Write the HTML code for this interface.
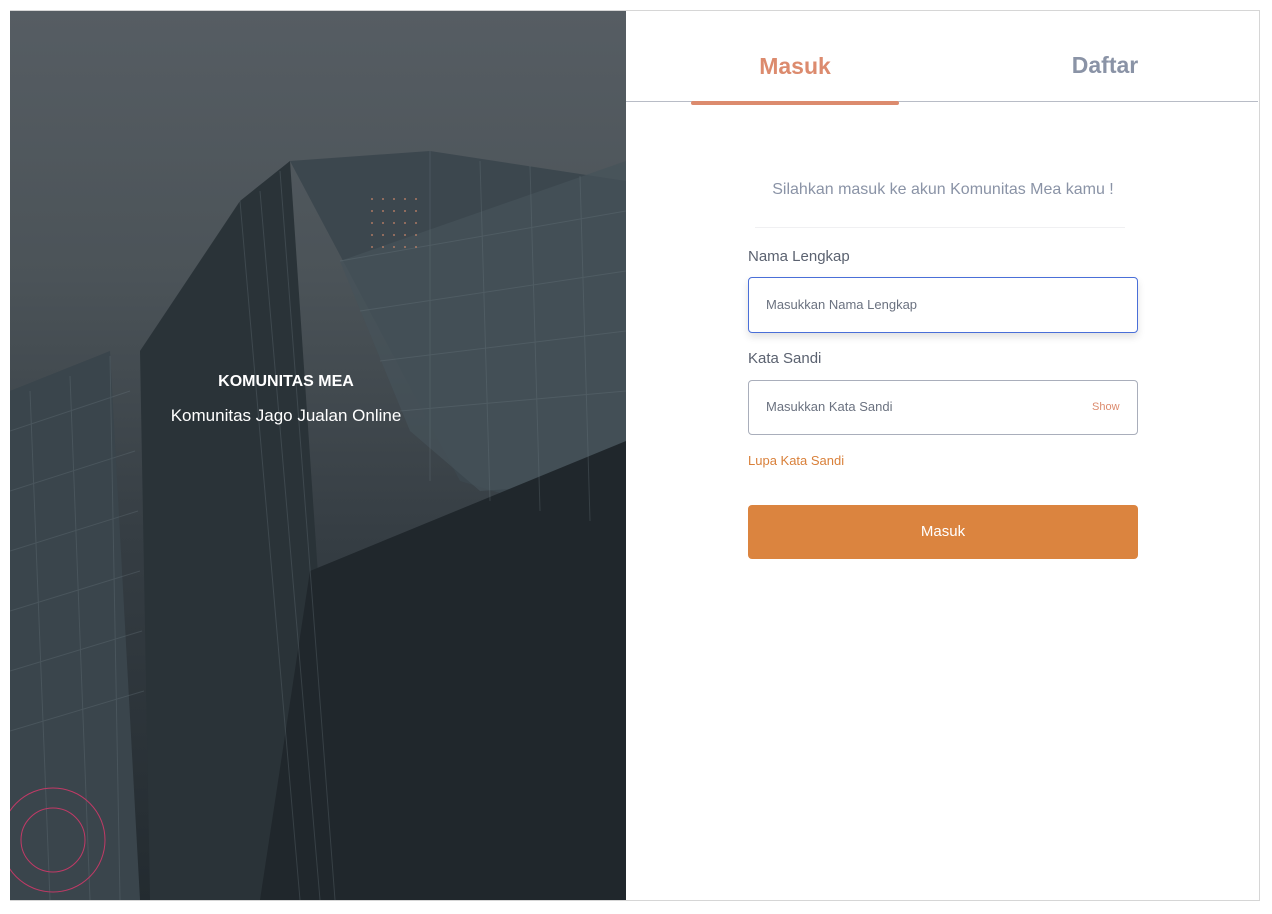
<!DOCTYPE html>
<html><head><style>
body{margin:0;width:1272px;height:914px;background:#fff;font-family:"Liberation Sans",sans-serif;position:relative;overflow:hidden}
.frame{position:absolute;left:10px;top:10px;width:1248px;height:889px;border:1px solid #d6d6d6}
.left{position:absolute;left:10px;top:11px;width:616px;height:889px;overflow:hidden;background:linear-gradient(180deg,#565d63 0%,#4b5358 30%,#353d43 60%,#232b30 100%)}
.abs{position:absolute}
</style></head><body>
<div class="frame"></div>
<div class="left">
<svg width="616" height="889" style="position:absolute;left:0;top:0">
<polygon points="0,380 100,340 130,889 0,889" fill="#3a454c"/>
<polygon points="130,340 230,190 280,150 330,889 140,889" fill="#2a3338"/>
<polygon points="280,150 420,140 616,170 616,520 450,470" fill="#3c474e"/>
<polygon points="330,250 616,150 616,470 470,480 400,420" fill="#46525a" opacity=".7"/>
<polygon points="300,560 616,430 616,889 250,889" fill="#20272c"/>
<g stroke="#6d7a82" stroke-width="1" opacity=".3" fill="none">
<path d="M0 420 L120 380 M0 480 L125 440 M0 540 L128 500 M0 600 L130 560 M0 660 L132 620 M0 720 L134 680 M20 380 L40 889 M60 365 L80 889 M100 345 L110 889"/>
<path d="M230 190 L290 889 M250 180 L310 889 M270 160 L325 889"/>
<path d="M420 140 L420 470 M470 150 L480 490 M520 155 L530 500 M570 165 L580 510 M330 250 L616 200 M350 300 L616 260 M370 350 L616 320 M390 400 L616 380"/>
</g>
<g fill="#c7866a" opacity=".8">
<g id="r"><circle cx="362" cy="188" r="1"/><circle cx="373" cy="188" r="1"/><circle cx="384" cy="188" r="1"/><circle cx="395" cy="188" r="1"/><circle cx="406" cy="188" r="1"/></g>
<use href="#r" y="12"/><use href="#r" y="24"/><use href="#r" y="36"/><use href="#r" y="48"/>
</g>
<circle cx="43" cy="829" r="32" stroke="#c03a66" fill="none" stroke-width="1"/>
<circle cx="43" cy="829" r="52" stroke="#c03a66" fill="none" stroke-width="1"/>
</svg>
<div class="abs" style="left:0;width:552px;top:362px;text-align:center;color:#fff;font-weight:bold;font-size:16px">KOMUNITAS MEA</div>
<div class="abs" style="left:0;width:552px;top:395px;text-align:center;color:#fff;font-size:17px">Komunitas Jago Jualan Online</div>
</div>
<div class="abs" style="left:626px;top:101px;width:632px;height:1px;background:#b8bcc6"></div>
<div class="abs" style="left:691px;top:101px;width:208px;height:4px;border-radius:2px;background:#dc8b6e"></div>
<div class="abs" style="left:691px;width:208px;top:53px;text-align:center;color:#dc8b6e;font-weight:bold;font-size:23px">Masuk</div>
<div class="abs" style="left:1000px;width:210px;top:52px;text-align:center;color:#8a93a6;font-weight:bold;font-size:23px">Daftar</div>
<div class="abs" style="left:755px;width:376px;top:181px;text-align:center;color:#8a93a6;font-size:16px">Silahkan masuk ke akun Komunitas Mea kamu !</div>
<div class="abs" style="left:755px;top:227px;width:370px;height:1px;background:#f0f0f2"></div>
<div class="abs" style="left:748px;top:248px;color:#5b6270;font-size:15px">Nama Lengkap</div>
<div class="abs" style="left:748px;top:277px;width:388px;height:54px;border:1px solid #4a6fd8;border-radius:4px;box-shadow:0 4px 8px rgba(0,0,0,.12)"></div>
<div class="abs" style="left:766px;top:297px;color:#6b7280;font-size:13px">Masukkan Nama Lengkap</div>
<div class="abs" style="left:748px;top:350px;color:#5b6270;font-size:15px">Kata Sandi</div>
<div class="abs" style="left:748px;top:380px;width:388px;height:53px;border:1px solid #a9aebb;border-radius:4px"></div>
<div class="abs" style="left:766px;top:399px;color:#6b7280;font-size:13px">Masukkan Kata Sandi</div>
<div class="abs" style="left:1092px;top:401px;color:#dc8b6e;font-size:11px">Show</div>
<div class="abs" style="left:748px;top:453px;color:#d9803a;font-size:13px">Lupa Kata Sandi</div>
<div class="abs" style="left:748px;top:505px;width:390px;height:54px;background:#db843f;border-radius:4px;color:#fff;font-size:15px;line-height:54px;text-align:center">Masuk</div>
</body></html>
